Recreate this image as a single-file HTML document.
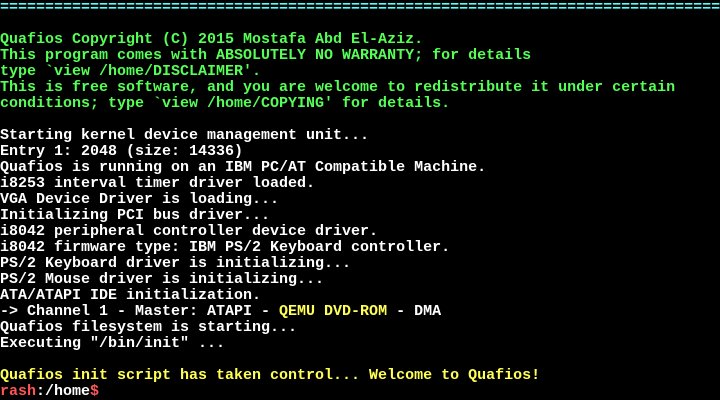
<!DOCTYPE html><html><head><style>
html,body{margin:0;padding:0;background:#000;width:720px;height:400px;overflow:hidden}
pre{margin:0;font-family:"Liberation Mono",monospace;font-size:15px;line-height:16px;font-weight:bold;color:#fff;white-space:pre}
.c{color:#55ffff}.g{color:#55ff55}.y{color:#ffff55}.r{color:#ff5555}
</style></head><body><pre><span class="c">================================================================================</span>

<span class="g">Quafios Copyright (C) 2015 Mostafa Abd El-Aziz.
This program comes with ABSOLUTELY NO WARRANTY; for details
type `view /home/DISCLAIMER'.
This is free software, and you are welcome to redistribute it under certain
conditions; type `view /home/COPYING' for details.</span>

Starting kernel device management unit...
Entry 1: 2048 (size: 14336)
Quafios is running on an IBM PC/AT Compatible Machine.
i8253 interval timer driver loaded.
VGA Device Driver is loading...
Initializing PCI bus driver...
i8042 peripheral controller device driver.
i8042 firmware type: IBM PS/2 Keyboard controller.
PS/2 Keyboard driver is initializing...
PS/2 Mouse driver is initializing...
ATA/ATAPI IDE initialization.
-&gt; Channel 1 - Master: ATAPI - <span class="y">QEMU DVD-ROM</span> - DMA
Quafios filesystem is starting...
Executing "/bin/init" ...

<span class="y">Quafios init script has taken control... Welcome to Quafios!</span>
<span class="r">rash</span>:/home<span class="r">$</span></pre></body></html>
